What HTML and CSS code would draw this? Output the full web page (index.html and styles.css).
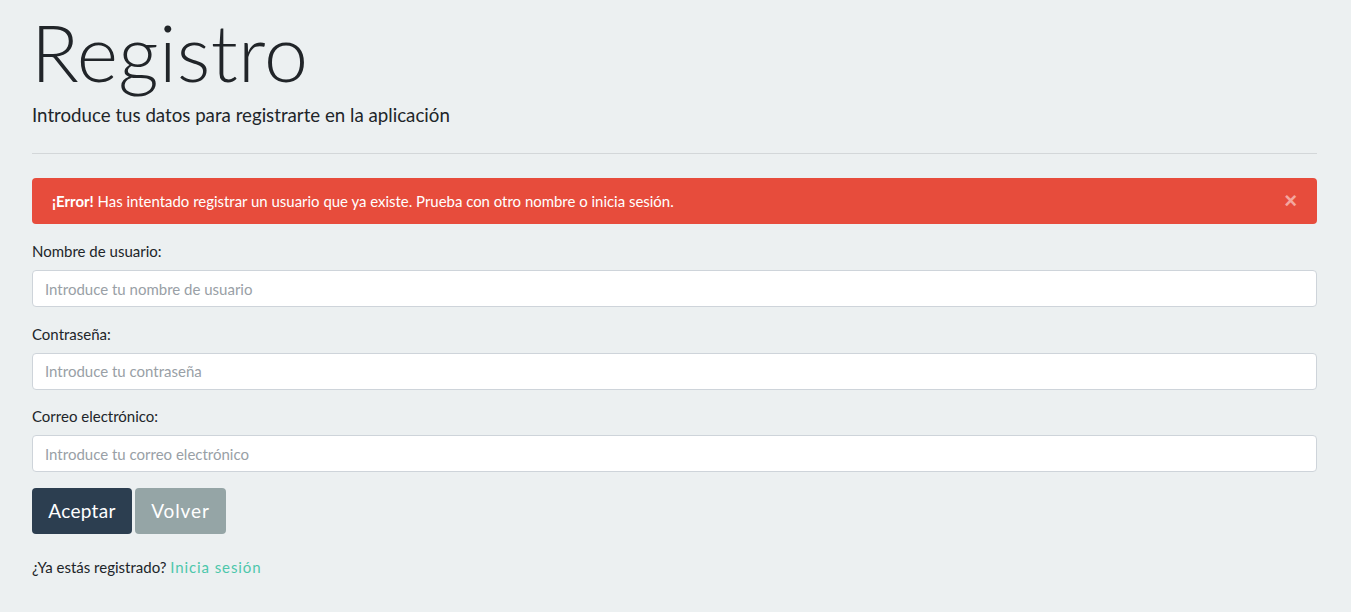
FILE: index.html
```html
<!DOCTYPE html>
<html lang="es">
<head>
<meta charset="utf-8">
<title>Registro</title>
<link rel="stylesheet" href="styles.css">
</head>
<body>
<main class="container">
  <header class="page-header">
    <h1 class="title">Registro</h1>
    <p class="lead">Introduce tus datos para registrarte en la aplicación</p>
  </header>
  <hr class="divider">
  <div class="alert">
    <span><strong>¡Error!</strong> Has intentado registrar un usuario que ya existe. Prueba con otro nombre o inicia sesión.</span>
    <button class="close" type="button" aria-label="Cerrar">×</button>
  </div>
  <form class="form">
    <div class="group">
      <label class="label" for="u">Nombre de usuario:</label>
      <input class="input" id="u" type="text" placeholder="Introduce tu nombre de usuario">
    </div>
    <div class="group">
      <label class="label" for="p">Contraseña:</label>
      <input class="input" id="p" type="password" placeholder="Introduce tu contraseña">
    </div>
    <div class="group last">
      <label class="label" for="e">Correo electrónico:</label>
      <input class="input" id="e" type="email" placeholder="Introduce tu correo electrónico">
    </div>
    <div class="actions">
      <button class="btn btn-primary" type="submit">Aceptar</button>
      <button class="btn btn-secondary" type="button">Volver</button>
    </div>
  </form>
  <p class="footer-text">¿Ya estás registrado? <a class="link" href="#">Inicia sesión</a></p>
</main>
</body>
</html>
```

FILE: styles.css
```css
* { box-sizing: border-box; }
html, body { margin: 0; padding: 0; }
body {
  background: #ecf0f1;
  color: #212529;
  font-family: "Lato", "Liberation Sans", sans-serif;
  font-size: 15px;
}
.container {
  padding: 0 34px 0 32px;
}
.page-header { padding-top: 6px; }
.title {
  margin: 0 0 0 -1px;
  font-family: "Lato", sans-serif;
  font-weight: 300;
  font-size: 79px;
  line-height: 92px;
  color: #212529;
  letter-spacing: 0.3px;
}
.lead {
  margin: 5px 0 0;
  font-size: 18.7px;
  line-height: 24px;
  font-weight: 400;
}
.divider {
  margin: 26px 0 24px;
  border: 0;
  border-top: 1px solid #d3d7d9;
}
.alert {
  display: flex;
  align-items: center;
  justify-content: space-between;
  height: 46px;
  padding: 0 20px;
  background: #e74c3c;
  color: #fff;
  border-radius: 4px;
  font-size: 14.95px;
}
.alert strong { font-weight: 700; }
.close {
  background: none;
  border: 0;
  color: #f4a79f;
  font-size: 22px;
  font-weight: 700;
  padding: 0;
  line-height: 1;
  font-family: "Liberation Sans", sans-serif;
}
.form { margin-top: 17px; }
.group { margin-bottom: 16.5px; }
.group.last { margin-bottom: 0; }
.label {
  display: block;
  margin-bottom: 9px;
  font-size: 15px;
  line-height: 20px;
}
.input {
  display: block;
  width: 100%;
  height: 37px;
  padding: 0 12px;
  border: 1px solid #ced4da;
  border-radius: 4px;
  background: #fff;
  font-family: "Lato", sans-serif;
  font-size: 15px;
  color: #212529;
}
.input::placeholder { color: #99a0a6; }
.actions {
  display: flex;
  gap: 3px;
  margin-top: 15.5px;
}
.btn {
  height: 46px;
  border: 0;
  border-radius: 4px;
  padding: 0;
  font-family: "Lato", sans-serif;
  font-size: 19px;
  letter-spacing: 0.3px;
  color: #fff;
  text-align: center;
}
.btn-primary { background: #2c3e50; width: 100px; }
.btn-secondary { background: #95a5a6; width: 91px; letter-spacing: 0.9px; }
.footer-text {
  margin: 23px 0 0;
  font-size: 15px;
  line-height: 20px;
}
.link {
  color: #4cc7ab;
  text-decoration: none;
  letter-spacing: 0.9px;
}
```
